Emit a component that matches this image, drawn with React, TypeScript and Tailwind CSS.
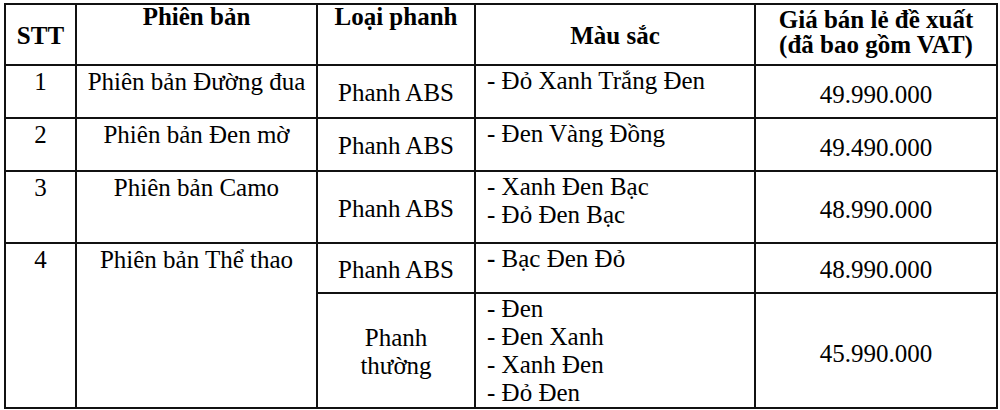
const rows = [
  { stt: "1", name: "Phiên bản Đường đua", brake: "Phanh ABS", colors: ["Đỏ Xanh Trắng Đen"], price: "49.990.000", h: "h-[53px]" },
  { stt: "2", name: "Phiên bản Đen mờ", brake: "Phanh ABS", colors: ["Đen Vàng Đồng"], price: "49.490.000", h: "h-[53px]" },
  { stt: "3", name: "Phiên bản Camo", brake: "Phanh ABS", colors: ["Xanh Đen Bạc", "Đỏ Đen Bạc"], price: "48.990.000", h: "h-[72px]" },
];

const cell = "border-2 border-[#111] p-0";

function ColorList({ colors, boldDash }: { colors: string[]; boldDash?: boolean }) {
  return (
    <div className="pl-[11px] pt-[1px] text-left">
      {colors.map((c) => (
        <div key={c}>
          {boldDash ? <b>-</b> : "-"} {c}
        </div>
      ))}
    </div>
  );
}

export default function App() {
  return (
    <div className="h-[410px] w-[1000px] bg-white pl-[4px] pt-[3px] text-black font-['Liberation_Serif','Times_New_Roman',serif] text-[25px] leading-[28px]">
      <table className="w-[994px] table-fixed border-collapse">
        <colgroup>
          <col className="w-[71px]" />
          <col className="w-[241px]" />
          <col className="w-[158px]" />
          <col className="w-[280px]" />
          <col className="w-[242px]" />
        </colgroup>
        <thead>
          <tr className="h-[61px] font-bold text-center">
            <th className={`${cell} align-middle pt-[3px]`}>STT</th>
            <th className={`${cell} align-top leading-[24px]`}>Phiên bản</th>
            <th className={`${cell} align-top leading-[24px]`}>Loại phanh</th>
            <th className={`${cell} align-middle pt-[3px]`}>Màu sắc</th>
            <th className={`${cell} align-top pt-[2px] leading-[25px]`}>
              Giá bán lẻ đề xuất
              <br />
              (đã bao gồm VAT)
            </th>
          </tr>
        </thead>
        <tbody>
          {rows.map((r) => (
            <tr key={r.stt} className={r.h}>
              <td className={`${cell} align-top pt-[2px] text-center`}>{r.stt}</td>
              <td className={`${cell} align-top pt-[2px] text-center`}>{r.name}</td>
              <td className={`${cell} align-middle pt-[3px] text-center`}>{r.brake}</td>
              <td className={`${cell} align-top`}>
                <ColorList colors={r.colors} />
              </td>
              <td className={`${cell} align-middle pt-[6px] text-center`}>{r.price}</td>
            </tr>
          ))}
          <tr className="h-[50px]">
            <td rowSpan={2} className={`${cell} align-top pt-[2px] text-center`}>4</td>
            <td rowSpan={2} className={`${cell} align-top pt-[2px] text-center`}>Phiên bản Thể thao</td>
            <td className={`${cell} align-middle pt-[3px] text-center`}>Phanh ABS</td>
            <td className={`${cell} align-top`}>
              <ColorList colors={["Bạc Đen Đỏ"]} boldDash />
            </td>
            <td className={`${cell} align-middle pt-[4px] text-center`}>48.990.000</td>
          </tr>
          <tr className="h-[114px]">
            <td className={`${cell} align-middle pt-[2px] text-center`}>
              Phanh
              <br />
              thường
            </td>
            <td className={`${cell} align-top`}>
              <ColorList colors={["Đen", "Đen Xanh", "Xanh Đen", "Đỏ Đen"]} />
            </td>
            <td className={`${cell} align-middle pt-[6px] text-center`}>45.990.000</td>
          </tr>
        </tbody>
      </table>
    </div>
  );
}
